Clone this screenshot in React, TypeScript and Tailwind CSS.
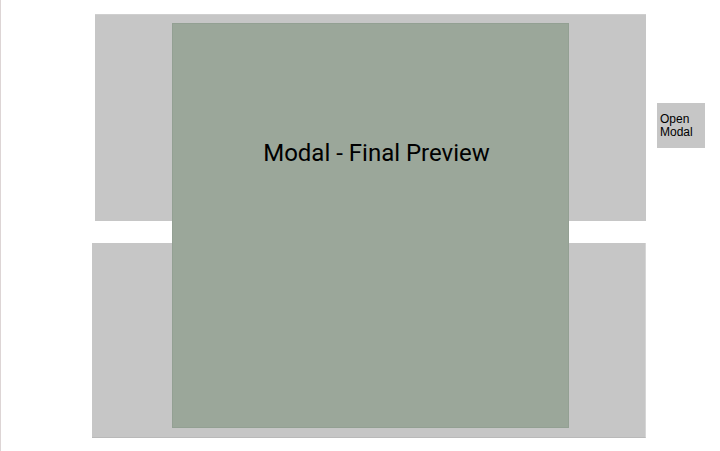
import React from 'react';

const App: React.FC = () => {
  return (
    <div className="relative flex h-[451px] w-[720px] overflow-hidden border-l border-[#ddd5d5] bg-white font-['Roboto',sans-serif]">
      <div className="flex w-[645px] flex-col gap-[22px] pt-[14px]">
        <div className="ml-[94px] h-[207px] border-t border-[#cfcfcf] bg-[#c6c6c6]" />
        <div className="ml-[91px] h-[195px] border-r border-b border-r-[#d6d6d6] border-b-[#b9b9b9] bg-[#c6c6c6]" />
      </div>

      <div className="ml-[11px] pt-[103px]">
        <button className="flex h-[45px] w-[48px] flex-col items-start bg-[#c6c6c6] pl-[3px] pt-[10px] text-left font-['Liberation_Sans',sans-serif] text-[12px] leading-[13px] text-black">
          <span>Open</span>
          <span>Modal</span>
        </button>
      </div>

      {/* modal overlay */}
      <div className="absolute left-[171px] top-[23px] flex h-[405px] w-[397px] justify-center border border-[#93a093] bg-[#9ba79a] pt-[115px] pl-[12px]">
        <h2 className="text-[24px] leading-[28px] text-black">Modal - Final Preview</h2>
      </div>
    </div>
  );
};

export default App;
